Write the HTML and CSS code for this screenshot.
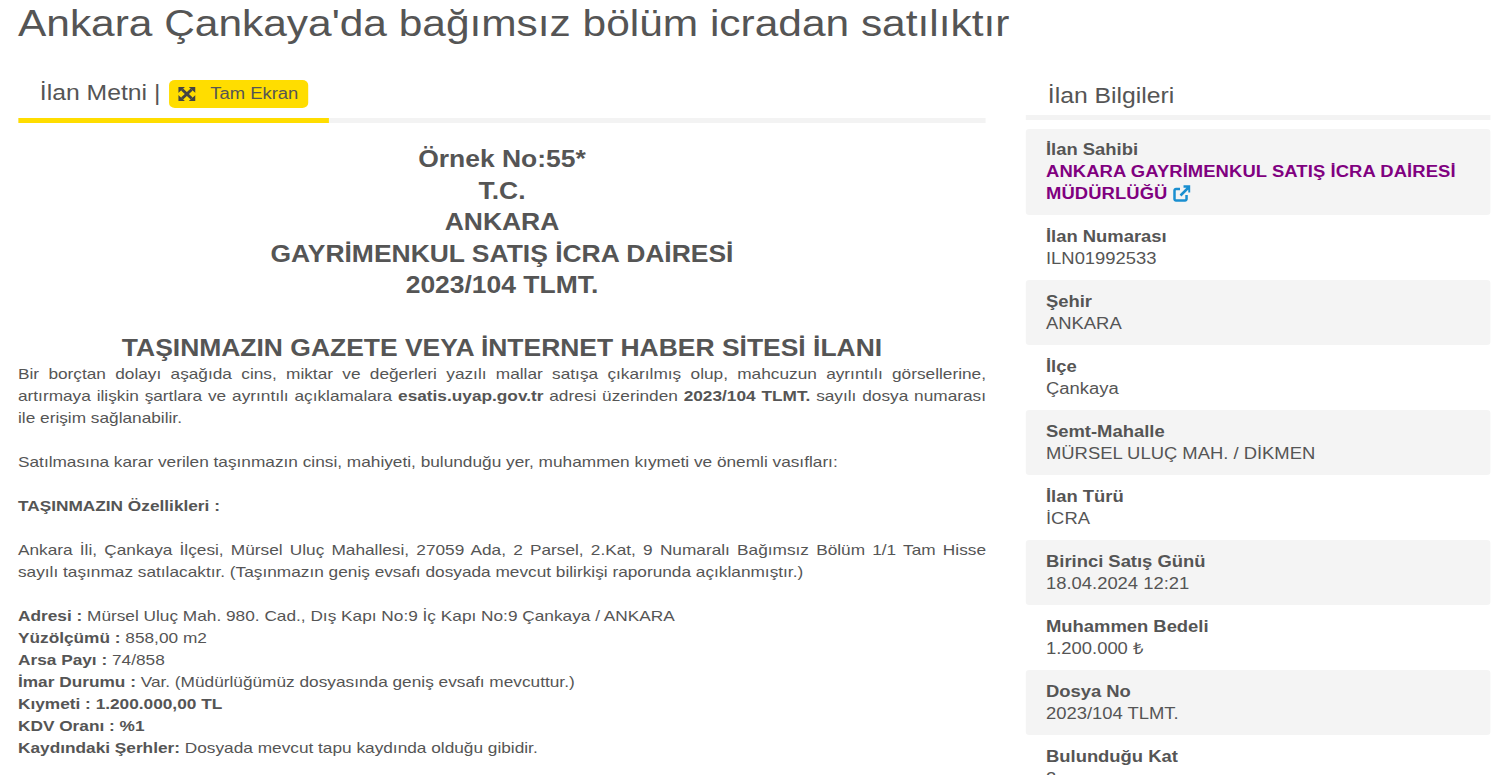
FILE: index.html
```html
<!DOCTYPE html>
<html lang="tr">
<head>
<meta charset="utf-8">
<title>İlan</title>
<link rel="stylesheet" href="styles.css">
</head>
<body>
<div class="page">
<h1 class="title">Ankara Çankaya'da bağımsız bölüm icradan satılıktır</h1>
<div class="layout">
  <main class="main">
    <div class="tabs">
      <div class="tab"><span class="tab-label">İlan Metni |</span>
        <button class="full"><svg class="full-icon" viewBox="0 0 18 18" preserveAspectRatio="none"><path class="x" d="M4 4l10 10M14 4L4 14"/><path class="tips" d="M0 1h7L0 8zM18 1h-7l7 7zM18 17h-7l7-7zM0 17h7l-7-7z"/></svg><span>Tam Ekran</span></button>
      </div>
    </div>
    <div class="heads">
      <div>Örnek No:55*</div><div>T.C.</div><div>ANKARA</div><div>GAYRİMENKUL SATIŞ İCRA DAİRESİ</div><div>2023/104 TLMT.</div>
    </div>
    <h2 class="sub">TAŞINMAZIN GAZETE VEYA İNTERNET HABER SİTESİ İLANI</h2>
    <p class="just">Bir borçtan dolayı aşağıda cins, miktar ve değerleri yazılı mallar satışa çıkarılmış olup, mahcuzun ayrıntılı görsellerine, artırmaya ilişkin şartlara ve ayrıntılı açıklamalara <b>esatis.uyap.gov.tr</b> adresi üzerinden <b>2023/104 TLMT.</b> sayılı dosya numarası ile erişim sağlanabilir.</p>
    <p>Satılmasına karar verilen taşınmazın cinsi, mahiyeti, bulunduğu yer, muhammen kıymeti ve önemli vasıfları:</p>
    <p><b>TAŞINMAZIN Özellikleri :</b></p>
    <p class="just">Ankara İli, Çankaya İlçesi, Mürsel Uluç Mahallesi, 27059 Ada, 2 Parsel, 2.Kat, 9 Numaralı Bağımsız Bölüm 1/1 Tam Hisse sayılı taşınmaz satılacaktır. (Taşınmazın geniş evsafı dosyada mevcut bilirkişi raporunda açıklanmıştır.)</p>
    <p><b>Adresi :</b> Mürsel Uluç Mah. 980. Cad., Dış Kapı No:9 İç Kapı No:9 Çankaya / ANKARA<br>
    <b>Yüzölçümü :</b> 858,00 m2<br>
    <b>Arsa Payı :</b> 74/858<br>
    <b>İmar Durumu :</b> Var. (Müdürlüğümüz dosyasında geniş evsafı mevcuttur.)<br>
    <b>Kıymeti : 1.200.000,00 TL</b><br>
    <b>KDV Oranı : %1</b><br>
    <b>Kaydındaki Şerhler:</b> Dosyada mevcut tapu kaydında olduğu gibidir.</p>
  </main>
  <aside class="side">
    <h3 class="side-title">İlan Bilgileri</h3>
    <div class="rows">
      <div class="row row-owner"><b>İlan Sahibi</b><a class="owner">ANKARA GAYRİMENKUL SATIŞ İCRA DAİRESİ MÜDÜRLÜĞÜ <svg class="ext" viewBox="0 0 18 17" preserveAspectRatio="none"><path d="M13.500 10v4a1.500 1.500 0 0 1-1.500 1.500H3A1.500 1.500 0 0 1 1.500 14V5.500A1.500 1.500 0 0 1 3 4h4"/><path d="M10.500 1.500h6v6M16.500 1.500L7.500 10.500"/></svg></a></div>
      <div class="row"><b>İlan Numarası</b><span>ILN01992533</span></div>
      <div class="row"><b>Şehir</b><span>ANKARA</span></div>
      <div class="row"><b>İlçe</b><span>Çankaya</span></div>
      <div class="row"><b>Semt-Mahalle</b><span>MÜRSEL ULUÇ MAH. / DİKMEN</span></div>
      <div class="row"><b>İlan Türü</b><span>İCRA</span></div>
      <div class="row"><b>Birinci Satış Günü</b><span>18.04.2024 12:21</span></div>
      <div class="row"><b>Muhammen Bedeli</b><span>1.200.000 ₺</span></div>
      <div class="row"><b>Dosya No</b><span>2023/104 TLMT.</span></div>
      <div class="row"><b>Bulunduğu Kat</b><span>2</span></div>
    </div>
  </aside>
</div>
</div>
</body>
</html>
```
FILE: styles.css
```css
html, body { margin: 0; height: 775px; overflow: hidden; background: #fff; }
body { font-family: "Liberation Sans", Arial, sans-serif; color: #555; }
.page { width: 1304.350px; padding: 0 8.700px 0 15.650px; box-sizing: border-box; transform: scaleX(1.15); transform-origin: 0 0; }
.title { margin: 0; padding-top: 3px; height: 59px; font-size: 36.900px; line-height: 42px; font-weight: 400; }
.layout { display: flex; gap: 34.800px; align-items: flex-start; }
.main { width: 841.740px; flex: none; font-size: 15px; line-height: 22px; }
.tabs { border-bottom: 5px solid #f3f3f3; height: 56px; }
.tab { width: 270.430px; height: 56px; box-sizing: border-box; display: flex; align-items: flex-end; gap: 7.500px; padding-bottom: 10px; position: relative; }
.tab::after { content: ""; position: absolute; left: 0; right: 0; bottom: -5px; height: 5px; background: #ffdd00; }
.tab-label { margin: 0 0 -1px 19px; font-size: 21.500px; line-height: 32px; }
.full { display: inline-flex; align-items: center; gap: 13px; height: 28px; padding: 0 9px 0 8px; background: #ffdd00; border: 0; border-radius: 5px; font: 16px "Liberation Sans", sans-serif; color: #555; }
.full-icon { width: 15px; height: 16px; }
.x { stroke: #444; stroke-width: 3; fill: none; }
.tips { fill: #444; }
.heads { margin-top: 21px; text-align: center; font-size: 23px; line-height: 31.500px; font-weight: 700; }
.sub { margin: 30px 0 0; text-align: center; font-size: 23px; line-height: 32px; font-weight: 700; }
.sub + p { margin-top: -1px; }
p { margin: 0 0 22px; }
.just { text-align: justify; }
.side { flex: 1; min-width: 0; }
.side-title { margin: 0; padding: 21px 0 0 19px; height: 32px; font-size: 21.500px; line-height: 26px; font-weight: 400; border-bottom: 5px solid #f3f3f3; }
.rows { margin-top: 9px; }
.row { display: flex; flex-direction: column; padding: 11px 17.400px 10px; font-size: 16px; line-height: 22px; border-radius: 3px; }
.row:nth-child(odd) { background: #f4f4f4; }
.row-owner { padding: 10px 17.400px; }
.owner { color: #800080; font-weight: 700; letter-spacing: 0.080px; }
.ext { width: 15.700px; height: 17px; vertical-align: -3px; fill: none; stroke: #1a8fd0; stroke-width: 2.500; }
```
